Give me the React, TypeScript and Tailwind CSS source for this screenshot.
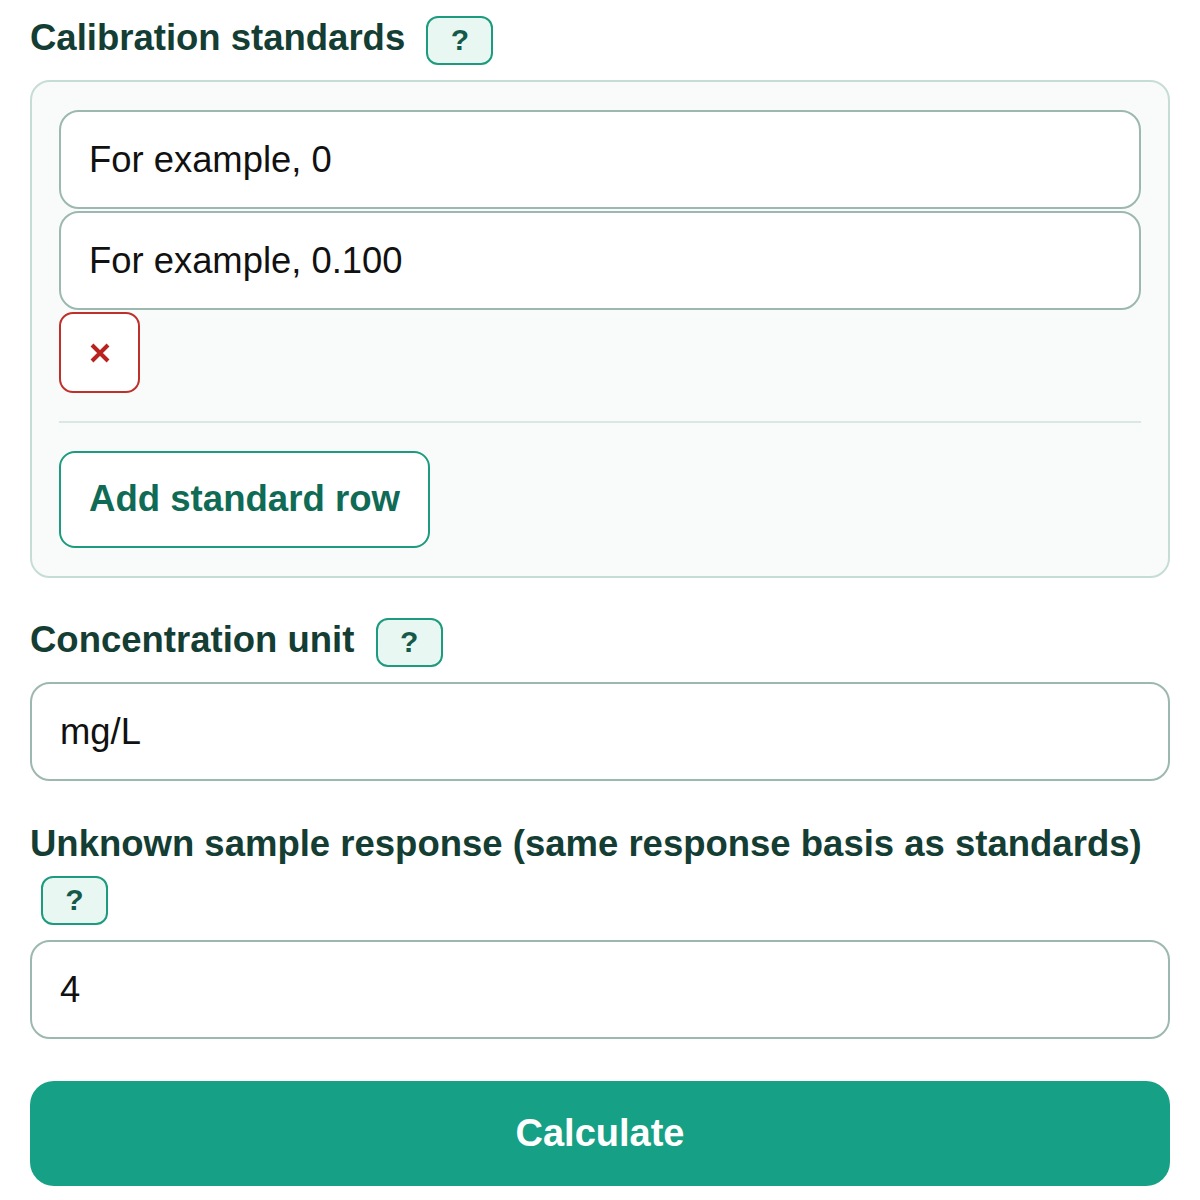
import React from "react";

const font = { fontFamily: '"Liberation Sans", Arial, sans-serif' };

function HelpBadge() {
  return (
    <button
      type="button"
      className="ml-[11px] inline-flex h-[49px] w-[67px] items-center justify-center rounded-[12px] border-2 border-[#1d9b7f] bg-[#e9f7f2] align-middle text-[30px] font-bold leading-none text-[#14594a]"
    >
      ?
    </button>
  );
}

function Label({ children }: { children: React.ReactNode }) {
  return (
    <div className="mb-[15px] text-[36.5px] font-bold leading-[54px] text-[#143d33]">
      {children} <HelpBadge />
    </div>
  );
}

function Field({ value }: { value: string }) {
  return (
    <input
      readOnly
      value={value}
      className="block h-[99px] w-full rounded-[20px] border-2 border-[#9db8b1] bg-white px-[28px] text-[36.4px] text-[#111] outline-none"
      style={font}
    />
  );
}

export default function App() {
  return (
    <div className="min-h-[1200px] bg-white px-[30px] pt-[11px]" style={font}>
      <Label>Calibration standards</Label>

      <div className="rounded-[20px] border-2 border-[#c6ddd6] bg-[#f8fbfa] px-[27px] py-[28px]">
        <div className="flex flex-col gap-[2px]">
          <Field value="For example, 0" />
          <Field value="For example, 0.100" />
        </div>
        <button
          type="button"
          className="mt-[2px] flex h-[81px] w-[81px] items-center justify-center rounded-[14px] border-2 border-[#c0302b] bg-white"
        >
          <svg width="20" height="20" viewBox="0 0 20 20">
            <path d="M2 2 L18 18 M18 2 L2 18" stroke="#b8231f" strokeWidth="4" />
          </svg>
        </button>
        <div className="my-[28px] h-[2px] bg-[#dbe7e3]" />
        <button
          type="button"
          className="h-[97px] rounded-[16px] border-2 border-[#1d9b7f] bg-white px-[28px] text-[36.6px] font-bold text-[#0f6b55]"
        >
          Add standard row
        </button>
      </div>

      <div className="mt-[35px]">
        <Label>Concentration unit</Label>
        <Field value="mg/L" />
      </div>

      <div className="mt-[36px]">
        <Label>Unknown sample response (same response basis as standards)</Label>
        <Field value="4" />
      </div>

      <button
        type="button"
        className="mt-[42px] h-[105px] w-full rounded-[24px] bg-[#16a085] text-[38px] font-bold text-white"
      >
        Calculate
      </button>
    </div>
  );
}
